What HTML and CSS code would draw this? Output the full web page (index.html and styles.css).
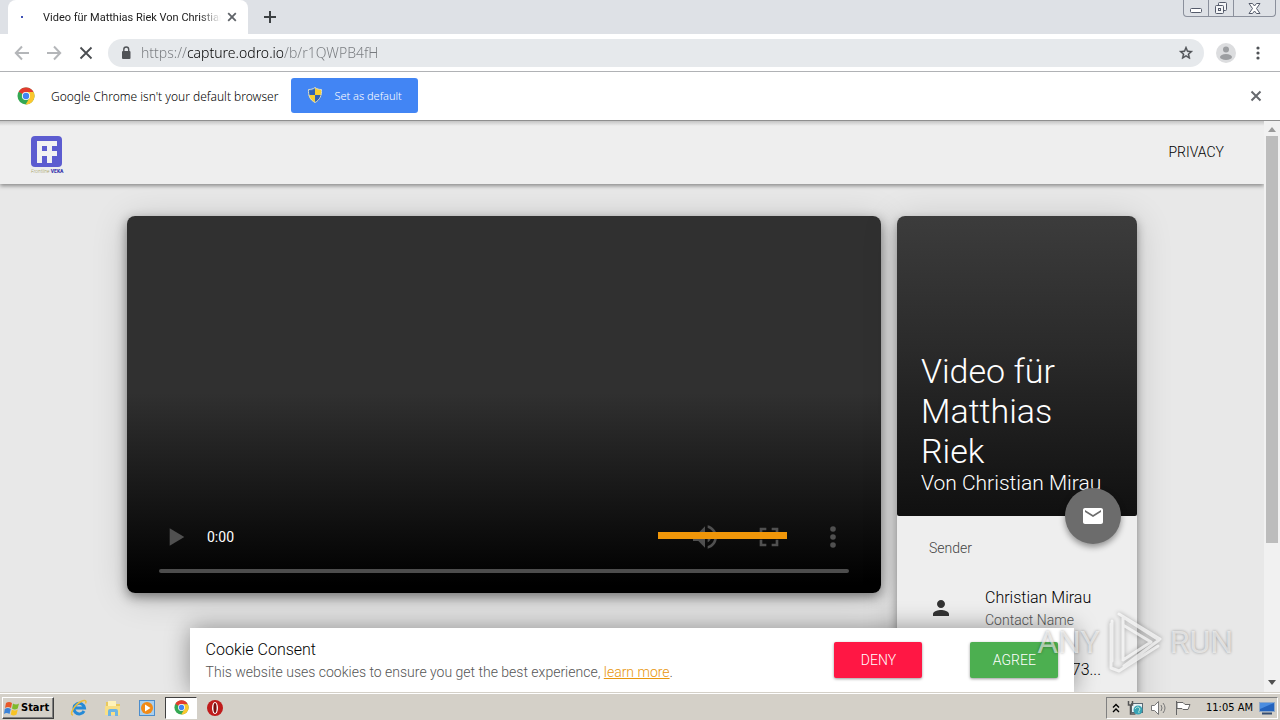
FILE: index.html
```html
<!DOCTYPE html>
<html lang="de">
<head>
<meta charset="utf-8">
<title>Video für Matthias Riek Von Christian Mirau</title>
<link rel="stylesheet" href="styles.css">
</head>
<body>

  <!-- Browser chrome -->
  <div class="tabstrip">
    <div class="tab">
      <span class="tab-spinner"></span>
      <span class="tab-title">Video für Matthias Riek Von Christian</span>
      <button class="icon-btn" aria-label="Close tab"><svg width="10" height="10" viewBox="0 0 10 10"><path d="M1.2 1.2l7.6 7.6M8.8 1.2L1.2 8.8" stroke="#5f6368" stroke-width="1.8"/></svg></button>
    </div>
    <button class="icon-btn new-tab" aria-label="New tab"><svg width="12" height="12" viewBox="0 0 12 12"><path d="M6 0v12M0 6h12" stroke="#3c4043" stroke-width="2"/></svg></button>
    <div class="window-buttons">
      <button aria-label="Minimize"><svg width="14" height="12" viewBox="0 0 14 12"><rect x="1.500" y="6.500" width="11" height="4" rx="1" fill="#fff" stroke="#555b6b"/></svg></button>
      <button aria-label="Restore"><svg width="14" height="14" viewBox="0 0 14 14" fill="#f4f5f7" stroke="#555b6b"><rect x="4.500" y="1.500" width="8" height="8" rx="1"/><rect x="1.500" y="4.500" width="8" height="8" rx="1"/><rect x="4.500" y="7.500" width="2" height="2"/></svg></button>
      <button class="window-close" aria-label="Close"><svg width="13" height="11" viewBox="0 0 13 11"><path d="M1 .5h3.500l2 2.500 2-2.500H12L8.500 5.500 12 10.500H8.500l-2-2.500-2 2.500H1l3.500-5z" fill="#fff" stroke="#555b6b"/></svg></button>
    </div>
  </div>

  <div class="toolbar">
    <button class="icon-btn" aria-label="Back"><svg width="16" height="16" viewBox="0 0 16 16" fill="none" stroke="#b4b6b9" stroke-width="2"><path d="M15 8H2M8 1.500L1.800 8 8 14.500"/></svg></button>
    <button class="icon-btn" aria-label="Forward"><svg width="16" height="16" viewBox="0 0 16 16" fill="none" stroke="#b4b6b9" stroke-width="2"><path d="M1 8h13M8 1.500L14.200 8 8 14.500"/></svg></button>
    <button class="icon-btn" aria-label="Stop loading"><svg width="16" height="16" viewBox="0 0 16 16"><path d="M2.500 2.500l11 11M13.500 2.500l-11 11" stroke="#4a4d51" stroke-width="1.800"/></svg></button>
    <div class="omnibox">
      <svg width="10" height="14" viewBox="0 0 10 14"><rect x="1" y="5" width="8.500" height="8" rx="1" fill="#505357"/><path d="M2.800 5.500V3.500a2.400 2.400 0 0 1 4.900 0v2" fill="none" stroke="#505357" stroke-width="1.400"/></svg>
      <input class="url" type="text" aria-label="Address" value="https://capture.odro.io/b/r1QWPB4fH">
      <button class="icon-btn" aria-label="Bookmark this page"><svg width="16" height="16" viewBox="0 0 24 24"><path d="M22 9.240l-7.190-.62L12 2 9.190 8.630 2 9.240l5.460 4.730L5.820 21 12 17.270 18.180 21l-1.630-7.030L22 9.240zM12 15.400l-3.760 2.270 1-4.280-3.320-2.880 4.380-.38L12 6.100l1.710 4.040 4.380.38-3.320 2.880 1 4.280L12 15.400z" fill="#4a4d51" stroke="#4a4d51" stroke-width=".6"/></svg></button>
    </div>
    <button class="icon-btn" aria-label="Profile"><svg width="20" height="20" viewBox="0 0 20 20"><circle cx="10" cy="10" r="10" fill="#dcdddf"/><circle cx="10" cy="6.500" r="3" fill="#9c9ea1"/><ellipse cx="10" cy="14" rx="6" ry="3" fill="#9c9ea1"/></svg></button>
    <button class="icon-btn" aria-label="Menu"><svg width="16" height="16" viewBox="0 0 16 16" fill="#505357"><circle cx="8" cy="3" r="1.600"/><circle cx="8" cy="8" r="1.600"/><circle cx="8" cy="13" r="1.600"/></svg></button>
  </div>

  <div class="infobar">
    <svg class="infobar-logo" width="18" height="18" viewBox="0 0 18 18"><use href="#chrome"/></svg>
    <span class="infobar-text">Google Chrome isn't your default browser</span>
    <button class="default-btn">
      <svg width="16" height="16" viewBox="0 0 16 16"><path d="M8 .5C6 2 4 2.500 1.500 2.500 1 8 3 13 8 15.500z" fill="#3d7bd0"/><path d="M8 .5c2 1.500 4 2 6.500 2C15 8 13 13 8 15.500z" fill="#f6cf32"/><path d="M1.500 8H8v7.500C4 13.500 2 11 1.500 8z" fill="#f6cf32"/><path d="M14.500 8H8v7.500c4-2 6-4.500 6.500-7.500z" fill="#2f62b5"/><path d="M2.500 3.500C5 3.500 6.500 3 8 2v6H2.600z" fill="#2f62b5"/><path d="M8 .5c2 1.500 4 2 6.500 2C15 8 13 13 8 15.500 3 13 1 8 1.500 2.500 4 2.500 6 2 8 .5z" fill="none" stroke="#d9dccb"/></svg>
      Set as default
    </button>
    <button class="icon-btn infobar-close" aria-label="Dismiss"><svg width="12" height="12" viewBox="0 0 12 12"><path d="M1.500 1.500l9 9M10.500 1.500l-9 9" stroke="#66696e" stroke-width="2"/></svg></button>
  </div>

  <!-- Web page -->
  <div class="viewport">
    <div class="page">
      <header class="site-header">
        <a class="logo" href="#" aria-label="VEKA">
          <svg width="31" height="31" viewBox="0 0 31 31"><rect width="31" height="31" rx="4" fill="#5c5cd0"/><path d="M6 27V5h20v5h-5v5h5v5h-5v7h-5v-7h-5v7zM11 10v5h5v-5z" fill="#f2f2f2" fill-rule="evenodd"/></svg>
          <span class="logo-text"><i>Frontline</i> <b>VEKA</b></span>
        </a>
        <a class="privacy" href="#">PRIVACY</a>
      </header>

      <main class="content">
        <section class="player" aria-label="Video">
          <div class="controls">
            <button aria-label="Play"><svg width="32" height="32" viewBox="0 0 24 24"><path d="M8 5.500v13l11-6.500z"/></svg></button>
            <span class="time">0:00</span>
            <span class="volume-bar"></span>
            <button aria-label="Mute"><svg width="32" height="32" viewBox="0 0 24 24"><path d="M3 9v6h4l5 5V4L7 9H3zm13.500 3c0-1.770-1.020-3.290-2.500-4.030v8.050c1.480-.73 2.500-2.250 2.500-4.020zM14 3.230v2.060c2.890.86 5 3.540 5 6.710s-2.110 5.850-5 6.710v2.060c4.010-.91 7-4.490 7-8.770s-2.990-7.860-7-8.770z"/></svg></button>
            <button aria-label="Full screen"><svg width="32" height="32" viewBox="0 0 24 24"><path d="M7 14H5v5h5v-2H7v-3zm-2-4h2V7h3V5H5v5zm12 7h-3v2h5v-5h-2v3zM14 5v2h3v3h2V5h-5z"/></svg></button>
            <button aria-label="More options"><svg width="32" height="32" viewBox="0 0 24 24"><circle cx="12" cy="6" r="2.100"/><circle cx="12" cy="12" r="2.100"/><circle cx="12" cy="18" r="2.100"/></svg></button>
          </div>
          <input class="seek" type="range" min="0" max="100" value="0" aria-label="Seek">
        </section>

        <aside class="card">
          <div class="card-head">
            <h1>Video für Matthias Riek</h1>
            <p>Von Christian Mirau</p>
            <button class="mail-btn" aria-label="Send mail"><svg width="24" height="24" viewBox="0 0 24 24"><path d="M20 4H4c-1.100 0-2 .9-2 2v12c0 1.100.9 2 2 2h16c1.100 0 2-.9 2-2V6c0-1.100-.9-2-2-2zm0 4l-8 5-8-5V6l8 5 8-5v2z" fill="#fff"/></svg></button>
          </div>
          <h2>Sender</h2>
          <ul>
            <li>
              <svg width="24" height="24" viewBox="0 0 24 24"><path d="M12 12c2.210 0 4-1.790 4-4s-1.790-4-4-4-4 1.790-4 4 1.790 4 4 4zm0 2c-2.670 0-8 1.340-8 4v2h16v-2c0-2.660-5.330-4-8-4z" fill="#333"/></svg>
              <div class="contact"><span>Christian Mirau</span><small>Contact Name</small></div>
            </li>
            <li>
              <div class="contact contact-phone"><span>73...</span></div>
            </li>
          </ul>
        </aside>
      </main>

      <div class="consent" role="dialog" aria-labelledby="consent-title">
        <div class="consent-text">
          <h3 id="consent-title">Cookie Consent</h3>
          <p>This website uses cookies to ensure you get the best experience, <a href="#">learn more</a>.</p>
        </div>
        <button class="deny">DENY</button>
        <button class="agree">AGREE</button>
      </div>
    </div>

    <div class="scrollbar">
      <svg width="8" height="5" viewBox="0 0 8 5"><path d="M0 5l4-5 4 5z" fill="#9a9a9a"/></svg>
      <div class="thumb"></div>
      <svg width="8" height="5" viewBox="0 0 8 5"><path d="M0 0l4 5 4-5z" fill="#505050"/></svg>
    </div>

    <div class="watermark">
      <span>ANY</span>
      <svg width="58" height="64" viewBox="0 0 58 64" fill="none" stroke-linejoin="round" stroke-linecap="round"><path d="M17 49V7l36 23-35 26M5 14v44l8 3 39-25M6 11v40M17 15l28 17-28 18M13 4l41 25"/></svg>
      <span>RUN</span>
    </div>
  </div>

  <!-- Taskbar -->
  <footer class="taskbar">
    <button class="start"><svg width="16" height="16" viewBox="0 0 16 16"><path d="M2 3c2-1.500 4-1.500 6 0L7 8C5 6.500 3 6.500 1 8z" fill="#e8592a"/><path d="M9 3.500c2 1.300 4 1.300 6 0l-1.300 5c-2 1.300-4 1.300-5.700 0z" fill="#7fba2c"/><path d="M.8 9c2-1.400 4-1.400 6 0l-1.300 5c-2-1.400-4-1.400-5.500 0z" fill="#3c83d8"/><path d="M7.800 9.500c2 1.300 4 1.300 6 0l-1.300 5c-2 1.300-4 1.300-5.700 0z" fill="#f7c325"/></svg>Start</button>
    <button class="task" aria-label="Internet Explorer"><svg width="18" height="18" viewBox="0 0 18 18" fill="none"><path d="M14 12a5.300 5.300 0 1 1 .5-3H5" stroke="#268ad6" stroke-width="3"/><path d="M3 16C-1 16 4 6 11 2.500c4-2 6-1 4.500 2" stroke="#edbd3b" stroke-width="1.500"/></svg></button>
    <button class="task" aria-label="Explorer"><svg width="18" height="18" viewBox="0 0 18 18"><path d="M2 3h6l1 2h7v11H2z" fill="#e9c95d"/><path d="M4 2h8v5H4z" fill="#fff3ba"/><path d="M1 7h15v9H1z" fill="#f8df86"/><path d="M4 17v-5q0-2 2-2h6q2 0 2 2v5h-3v-4H7v4z" fill="#6db5e3"/></svg></button>
    <button class="task" aria-label="Media Player"><svg width="18" height="18" viewBox="0 0 18 18"><rect x="1.500" y="1.500" width="15" height="15" fill="#a9cfee" stroke="#4c8dcc"/><circle cx="9" cy="9" r="6" fill="#f28a16"/><path d="M7 5.500v7L12.500 9z" fill="#fff"/></svg></button>
    <button class="task active" aria-label="Chrome"><svg width="15" height="15" viewBox="0 0 18 18"><g id="chrome"><circle cx="9" cy="9" r="8.500" fill="#34a853"/><path d="M9 9L1.600 4.700A8.500 8.500 0 0 1 16.500 5H9z" fill="#e33b2e"/><path d="M9 5h7.500A8.500 8.500 0 0 1 8.600 17.500L12.500 11z" fill="#fbc72e"/><circle cx="9" cy="9" r="4.100" fill="#fff"/><circle cx="9" cy="9" r="3.200" fill="#4285f4"/></g></svg></button>
    <button class="task" aria-label="Opera"><svg width="18" height="18" viewBox="0 0 18 18"><circle cx="9" cy="9" r="8" fill="#c01c1c"/><ellipse cx="9" cy="9" rx="3" ry="6" fill="#fff"/><ellipse cx="9" cy="9" rx="1.600" ry="5" fill="#7a0d0d"/></svg></button>

    <div class="tray">
      <svg width="8" height="10" viewBox="0 0 8 10"><path d="M1 4.500l3-3 3 3M1 9l3-3 3 3" fill="none" stroke="#000" stroke-width="1.400"/></svg>
      <svg width="18" height="16" viewBox="0 0 18 16"><rect x="5.500" y="3.500" width="11" height="9" fill="#e8f2f5" stroke="#596872"/><path d="M2.500 1v4h4V1M4.500 5v9h5" fill="none" stroke="#555" stroke-width="1.500"/><circle cx="12" cy="10" r="4.500" fill="#38a3b5"/><path d="M9 9q3-4 5 0-2 3-1 4" fill="none" stroke="#b8e8d6"/></svg>
      <svg width="18" height="16" viewBox="0 0 18 16" fill="none" stroke="#777"><path d="M1.500 5.500h3l4-4v13l-4-4h-3z" fill="#fff"/><path d="M11 5q2 3 0 6M13 3q4 5 0 10"/></svg>
      <svg width="18" height="16" viewBox="0 0 18 16"><path d="M2.500 1v14M3 2.500h6l2 2h5l-2 5h-5l-1-1H3z" fill="#fff" stroke="#666"/></svg>
      <time>11:05 AM</time>
      <svg width="16" height="14" viewBox="0 0 16 14"><rect x=".5" y="1.500" width="15" height="9" fill="#2463bd" stroke="#8fa9c9"/><path d="M1 2h14L1 8z" fill="#4b8de0"/><path d="M3 12.500h10" stroke="#354d70" stroke-width="2"/></svg>
    </div>
  </footer>

</body>
</html>
```

FILE: styles.css
```css
/* Base */
* {
  box-sizing: border-box;
}

body {
  display: flex;
  flex-direction: column;
  height: 100vh;
  margin: 0;
  overflow: hidden;
  font-family: Roboto, sans-serif;
  font-weight: 300;
  color: #000;
}

button {
  padding: 0;
  border: 0;
  background: transparent;
  font: inherit;
}

svg {
  display: block;
  flex-shrink: 0;
}

h1, h2, h3, p, ul {
  margin: 0;
  padding: 0;
  font-weight: 300;
}

.tabstrip, .toolbar, .infobar, .taskbar {
  display: flex;
  align-items: center;
  flex-shrink: 0;
  font-family: "DejaVu Sans Condensed", "DejaVu Sans", sans-serif;
  font-weight: 400;
}

.icon-btn {
  display: flex;
  align-items: center;
  justify-content: center;
}

/* Tabs */
.tabstrip {
  height: 34px;
  padding-left: 8px;
  background: #dee1e6;
}

.tab {
  display: flex;
  align-items: center;
  width: 240px;
  height: 34px;
  padding: 0 11px 0 13px;
  border-radius: 8px 8px 0 0;
  background: #fff;
}

.tab-spinner {
  width: 2px;
  height: 2px;
  margin-right: 20px;
  background: #3f51b5;
}

.tab-title {
  flex: 1;
  overflow: hidden;
  white-space: nowrap;
  margin-right: 6px;
  font-family: Roboto, sans-serif;
  font-size: 11px;
  color: #222;
  -webkit-mask-image: linear-gradient(90deg, #000 88%, transparent);
  mask-image: linear-gradient(90deg, #000 88%, transparent);
}

.new-tab {
  margin-left: 16px;
}

.window-buttons {
  display: flex;
  align-self: flex-start;
  height: 17px;
  margin-left: auto;
  margin-right: 4px;
  border: 1px solid #8b909c;
  border-top: 0;
  border-radius: 0 0 4px 4px;
}

.window-buttons button {
  display: flex;
  align-items: center;
  justify-content: center;
  width: 25px;
  border-right: 1px solid #8b909c;
}

.window-buttons .window-close {
  width: 41px;
  border-right: 0;
}

/* Address bar */
.toolbar {
  height: 38px;
  gap: 16px;
  padding: 0 14px;
  border-bottom: 1px solid #b0b2b5;
  background: #fff;
}

.toolbar .icon-btn:last-child {
  margin-left: -2px;
}

.omnibox {
  display: flex;
  flex: 1;
  align-items: center;
  height: 28px;
  margin: 0 -4px 0 -2px;
  padding: 0 10px 0 13px;
  border-radius: 14px;
  background: #e6e9ec;
}

.url {
  flex: 1;
  margin-left: 10px;
  padding: 0;
  border: 0;
  outline: 0;
  font-family: "Noto Sans", sans-serif;
  font-size: 14px;
  font-weight: 300;
  /* dark host name between the grey scheme and path */
  color: transparent;
  background: linear-gradient(90deg, #777a7e 47px, #000 47px, #000 142px, #777a7e 142px);
  -webkit-background-clip: text;
  background-clip: text;
}

/* Default browser bar */
.infobar {
  height: 49px;
  padding: 0 18px 0 17px;
  border-bottom: 1px solid #8f8f8f;
  background: #fff;
}

.infobar-text {
  margin: 0 13px 0 16px;
  font-family: "Noto Sans", sans-serif;
  font-size: 12px;
  font-weight: 300;
  color: #000;
}

.default-btn {
  display: flex;
  align-items: center;
  gap: 11px;
  height: 35px;
  margin-bottom: 2px;
  padding: 0 16px;
  border-radius: 3px;
  background: #4285f4;
  color: #fff;
  font-family: "Noto Sans", sans-serif;
  font-size: 11px;
  font-weight: 300;
}

.infobar-close {
  margin-left: auto;
}

/* Page */
.viewport {
  position: relative;
  display: flex;
  flex: 1;
  min-height: 0;
}

.page {
  position: relative;
  flex: 1;
  overflow: hidden;
  background: #e8e8e8;
}

.site-header {
  position: relative;
  display: flex;
  align-items: center;
  justify-content: space-between;
  height: 63px;
  padding: 0 40px 0 31px;
  background: linear-gradient(#c4c4c4, #eee 5px);
  box-shadow: 0 2px 4px rgba(0, 0, 0, .4);
}

.logo {
  padding-top: 5px;
  text-decoration: none;
}

.logo-text {
  display: block;
  font-size: 5px;
  line-height: 8px;
  color: #a3a05c;
}

.logo-text b {
  font-weight: 900;
  color: #4040b0;
}

.privacy {
  padding-bottom: 2px;
  font-size: 14px;
  color: #000;
  text-decoration: none;
}

.content {
  display: flex;
  align-items: flex-start;
  gap: 16px;
  width: 80%;
  max-width: 1010px;
  margin: 0 auto;
  padding-top: 32px;
}

/* Video */
.player {
  display: flex;
  flex: 1;
  flex-direction: column;
  justify-content: flex-end;
  aspect-ratio: 2 / 1;
  padding: 0 32px 20px;
  border-radius: 8px;
  background: linear-gradient(#303030 47%, #000 98%);
  box-shadow: 0 4px 12px rgba(0, 0, 0, .45), 0 4px 36px rgba(0, 0, 0, .16);
}

.controls {
  position: relative;
  display: flex;
  align-items: center;
  gap: 32px;
  height: 32px;
  margin-bottom: 16px;
}

.controls svg {
  fill: #505050;
}

.time {
  flex: 1;
  margin-left: -16px;
  font-size: 14px;
  font-weight: 400;
  color: #fff;
}

.volume-bar {
  position: absolute;
  right: 62px;
  top: 11px;
  width: 129px;
  height: 7px;
  background: #f09609;
}

.seek {
  appearance: none;
  width: 100%;
  height: 4px;
  margin: 0;
  border-radius: 2px;
  background: #4d4d4d;
}

.seek::-webkit-slider-thumb {
  appearance: none;
  width: 0;
  height: 0;
}

/* Sender card */
.card {
  flex: 0 0 240px;
  height: 600px;
  border-radius: 8px 8px 4px 4px;
  background: #eee;
  box-shadow: 0 4px 10px rgba(0, 0, 0, .35), 0 4px 36px rgba(0, 0, 0, .16);
}

.card-head {
  position: relative;
  display: flex;
  flex-direction: column;
  justify-content: flex-end;
  height: 300px;
  padding: 0 24px 21px;
  border-radius: 8px 8px 2px 2px;
  background: linear-gradient(#3c3c3c, #2a2a2a 45%, #101010);
  color: #fff;
}

.card-head h1 {
  font-size: 34px;
  line-height: 40px;
}

.card-head p {
  font-size: 21px;
  line-height: 24px;
  white-space: nowrap;
}

.mail-btn {
  position: absolute;
  right: 16px;
  bottom: -28px;
  display: flex;
  align-items: center;
  justify-content: center;
  width: 56px;
  height: 56px;
  border-radius: 50%;
  background: #6c6c6c;
  box-shadow: 0 3px 6px rgba(0, 0, 0, .4);
}

.card h2 {
  padding: 24px 32px 0;
  font-size: 14px;
  line-height: 16px;
  color: #444;
}

.card ul {
  padding-top: 16px;
  list-style: none;
}

.card li {
  display: flex;
  align-items: center;
  gap: 32px;
  height: 72px;
  padding: 0 32px;
}

.contact {
  padding-top: 2px;
  font-size: 16px;
  line-height: 23px;
  white-space: nowrap;
}

.contact small {
  display: block;
  font-size: 14px;
  color: #555;
}

.contact-phone {
  margin-left: auto;
  padding: 0 4px 22px 0;
}

/* Cookie consent */
.consent {
  position: absolute;
  left: 15%;
  bottom: 0;
  display: flex;
  align-items: center;
  width: 70%;
  height: 64px;
  padding: 0 16px;
  background: #fff;
  box-shadow: 0 0 24px rgba(0, 0, 0, .4);
}

.consent-text {
  flex: 1;
  padding-top: 2px;
}

.consent h3 {
  font-size: 16px;
  line-height: 22px;
}

.consent p {
  font-size: 14px;
  line-height: 22px;
  color: #555;
}

.consent a {
  color: #e8960c;
}

.consent button {
  width: 88px;
  height: 36px;
  border-radius: 2px;
  box-shadow: 0 1px 3px rgba(0, 0, 0, .4);
  font-size: 14px;
  color: #fff;
}

.consent .deny {
  margin-right: 48px;
  background: #ff1744;
}

.consent .agree {
  background: #4caf50;
}

/* Scrollbar */
.scrollbar {
  display: flex;
  flex-direction: column;
  align-items: center;
  width: 16px;
  padding: 6px 0 7px;
  background: #f1f1f1;
}

.thumb {
  width: 12px;
  height: 73%;
  margin: 4px 0 auto;
  background: #bcbcbc;
}

/* Watermark over the corner of the page */
.watermark {
  position: absolute;
  right: 47px;
  bottom: 18px;
  display: flex;
  align-items: center;
  gap: 6px;
  font-size: 32px;
  font-weight: 400;
  line-height: 64px;
  color: rgba(255, 255, 255, .6);
  text-shadow: 0 0 3px rgba(0, 0, 0, .35);
}

.watermark svg {
  stroke: rgba(255, 255, 255, .7);
  stroke-width: 3px;
  filter: drop-shadow(0 0 2px rgba(0, 0, 0, .4));
}

/* Taskbar */
.taskbar {
  height: 28px;
  padding: 2px 2px 0;
  border-top: 1px solid #d4d0c8;
  box-shadow: inset 0 1px #fff;
  background: #d4d0c8;
}

.start {
  display: flex;
  align-items: center;
  gap: 1px;
  width: 52px;
  height: 22px;
  margin-right: 9px;
  padding-left: 1px;
  border: 1px solid;
  border-color: #fff #404040 #404040 #fff;
  box-shadow: inset -1px -1px #808080;
  font-size: 11px;
  font-weight: 700;
}

.task {
  display: flex;
  align-items: center;
  justify-content: center;
  width: 32px;
  height: 22px;
  margin-right: 2px;
}

.task.active {
  border: 1px solid;
  border-color: #404040 #fff #fff #404040;
  background: #fff;
}

.tray {
  display: flex;
  align-items: center;
  gap: 6px;
  height: 22px;
  margin-left: auto;
  padding: 0 2px 0 5px;
  border: 1px solid;
  border-color: #808080 #fff #fff #808080;
}

.tray time {
  margin: 0 0 0 8px;
  font-size: 11px;
}
```
